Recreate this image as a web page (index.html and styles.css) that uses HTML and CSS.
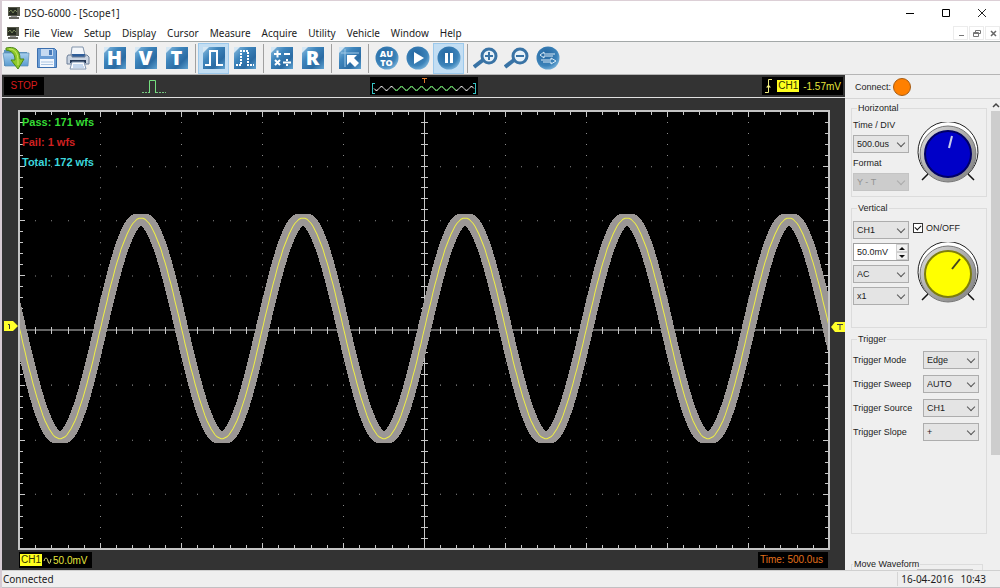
FILE: index.html
```html
<!DOCTYPE html>
<html lang="en">
<head>
    <meta charset="UTF-8">
    <meta name="viewport" content="width=device-width, initial-scale=1.0">
    <title>DSO-6000 - [Scope1]</title>
    <link rel="stylesheet" href="styles.css">
</head>
<body>
    <!-- shared gradients and symbols -->
    <svg class="defs" width="0" height="0" aria-hidden="true">
        <defs>
            <linearGradient id="blue" x1="0" y1="0" x2="1" y2="1">
                <stop offset="0" stop-color="#8fbfe0"/>
                <stop offset="0.35" stop-color="#3f86bd"/>
                <stop offset="0.7" stop-color="#2a6ba3"/>
                <stop offset="1" stop-color="#5fa3d2"/>
            </linearGradient>
            <radialGradient id="ball" cx="0.4" cy="0.35" r="0.7">
                <stop offset="0" stop-color="#24659f"/>
                <stop offset="0.7" stop-color="#3c83b9"/>
                <stop offset="1" stop-color="#7ab4dc"/>
            </radialGradient>
            <linearGradient id="folder" x1="0" y1="0" x2="0" y2="1">
                <stop offset="0" stop-color="#a8d0ee"/>
                <stop offset="1" stop-color="#5b9bd0"/>
            </linearGradient>
            <linearGradient id="metal" x1="0" y1="0" x2="1" y2="1">
                <stop offset="0" stop-color="#e4e4e4"/>
                <stop offset="0.5" stop-color="#a8a8a8"/>
                <stop offset="1" stop-color="#808080"/>
            </linearGradient>
            <symbol id="tile" viewBox="0 0 24 24">
                <path d="M5 1h18v22H1V6z" fill="url(#blue)"/>
                <path d="M1 1h6L1 7z" fill="#d5e7f4"/>
            </symbol>
            <symbol id="scope" viewBox="0 0 12 12">
                <rect width="12" height="9" fill="#57594c"/>
                <rect x="1" y="1" width="8" height="7" fill="#262b20"/>
                <path d="M1 5l2-2 2 3 2-3 2 2" fill="none" stroke="#77855a"/>
                <rect x="3" y="9" width="6" height="1" fill="#999"/>
                <rect x="1" y="10" width="10" height="2" fill="#66665f"/>
            </symbol>
        </defs>
    </svg>

    <header class="titlebar">
        <svg class="app-icon"><use href="#scope"/></svg>
        <h1>DSO-6000 - [Scope1]</h1>
        <div class="window-buttons">
            <button aria-label="Minimize"><svg width="10" height="10"><path d="M1 5.5h8" stroke="#000"/></svg></button>
            <button aria-label="Maximize"><svg width="10" height="10"><path d="M1.5 1.5h7v7h-7z" fill="none" stroke="#000"/></svg></button>
            <button aria-label="Close"><svg width="10" height="10"><path d="M1 1l8 8M9 1l-8 8" stroke="#222"/></svg></button>
        </div>
    </header>

    <nav class="menubar">
        <svg class="app-icon"><use href="#scope"/></svg>
        <button>File</button>
        <button>View</button>
        <button>Setup</button>
        <button>Display</button>
        <button>Cursor</button>
        <button>Measure</button>
        <button>Acquire</button>
        <button>Utility</button>
        <button>Vehicle</button>
        <button>Window</button>
        <button>Help</button>
        <div class="child-buttons">
            <button aria-label="Minimize child"><svg width="8" height="8"><path d="M2 6.5h5" stroke="#777"/></svg></button>
            <button aria-label="Restore child"><svg width="8" height="8"><path d="M2.5 3V1.500h5v3H6M.5 3.500h5v4h-5zM.5 4.500h5" fill="none" stroke="#777"/></svg></button>
            <button aria-label="Close child"><svg width="8" height="8"><path d="M2 2l5 5M7 2l-5 5" stroke="#666" stroke-width="1.500"/></svg></button>
        </div>
    </nav>

    <!-- toolbar -->
    <div class="toolbar">
        <button aria-label="Open">
            <svg width="28" height="24" viewBox="0 0 28 24">
                <path d="M2 4h9l2 2h12v14H2z" fill="#5c94bd"/>
                <path d="M1 7h26l-1 13H3z" fill="url(#folder)" stroke="#5a8db5" stroke-width=".7"/>
                <path d="M4 2c8-2 14 1 14 11h4l-6 10-7-9h4c0-6-3-9-9-10z" fill="#8ec92b" stroke="#4c8818"/>
                <path d="M7 3c6 0 9 4 9 12v4" fill="none" stroke="#cdec6c"/>
            </svg>
        </button>
        <button aria-label="Save">
            <svg width="22" height="24" viewBox="0 0 22 24">
                <path d="M1.500 2.500h17l2 2v17h-19z" fill="#6b9dd5" stroke="#3b6ead"/>
                <path d="M5 3h12v7H5z" fill="#c6daf1"/>
                <path d="M13 4h3v5h-3z" fill="#4779b8"/>
                <path d="M4 13h14v8H4z" fill="#f4f8fd"/>
                <path d="M5 16h12M5 18.500h12" stroke="#abc5e2"/>
            </svg>
        </button>
        <button aria-label="Print">
            <svg width="26" height="24" viewBox="0 0 26 24">
                <path d="M7 1h11l2 8H6z" fill="#f3f6fa" stroke="#8193aa"/>
                <path d="M7 8h13v3H7z" fill="#2e5d99"/>
                <path d="M3 9h4v2h13V9h2l2 2v7H2v-7z" fill="#cad4e1" stroke="#6c7f98"/>
                <path d="M5 14h16v3H5z" fill="#263a58"/>
                <path d="M7 16h12l2 7H5z" fill="#fafcff" stroke="#7f94b0"/>
                <path d="M8 19h10M8 21h11" stroke="#8fb2dc"/>
            </svg>
        </button>
        <span class="sep"></span>
        <button class="letter" aria-label="Horizontal"><svg width="24" height="24"><use href="#tile"/></svg><b>H</b></button>
        <button class="letter" aria-label="Vertical"><svg width="24" height="24"><use href="#tile"/></svg><b>V</b></button>
        <button class="letter" aria-label="Trigger"><svg width="24" height="24"><use href="#tile"/></svg><b>T</b></button>
        <span class="sep"></span>
        <button class="selected" aria-label="Pulse">
            <svg width="24" height="24"><use href="#tile"/><path d="M3 19h5V5h7v14h6" fill="none" stroke="#fff" stroke-width="2"/></svg>
        </button>
        <button aria-label="Dotted pulse">
            <svg width="24" height="24"><use href="#tile"/><path d="M3 19h5V5h7v14h6" fill="none" stroke="#fff" stroke-width="2" stroke-dasharray="2 1"/></svg>
        </button>
        <span class="sep"></span>
        <button aria-label="Math">
            <svg width="24" height="24"><use href="#tile"/><path d="M4 8h7M7.500 4.500v7M14 8h6M5 14l5 5M10 14l-5 5M13 16.500h8" stroke="#fff" stroke-width="2"/><path d="M16 13h2v2h-2zM16 18h2v2h-2z" fill="#fff"/></svg>
        </button>
        <button class="letter" aria-label="Reference"><svg width="24" height="24"><use href="#tile"/></svg><b>R</b></button>
        <span class="sep"></span>
        <button aria-label="Cursor measure">
            <svg width="24" height="24"><use href="#tile"/><path d="M3 7h18M7 3v18" stroke="#9fc8e6"/><path d="M9 9h10l-3 3 5 5-4 4-5-5-3 3z" fill="#fff"/></svg>
        </button>
        <span class="sep"></span>
        <button class="letter auto" aria-label="Auto"><svg width="24" height="24"><circle cx="12" cy="12" r="11.500" fill="url(#ball)"/></svg><b><span>AU</span><span>TO</span></b></button>
        <button aria-label="Run">
            <svg width="24" height="24"><circle cx="12" cy="12" r="11.500" fill="url(#ball)"/><path d="M8 6l10 6-10 6z" fill="#fff"/></svg>
        </button>
        <button class="selected" aria-label="Pause">
            <svg width="24" height="24"><circle cx="12" cy="12" r="11.500" fill="url(#ball)"/><path d="M9.500 7v10M14.500 7v10" stroke="#fff" stroke-width="3"/></svg>
        </button>
        <span class="sep"></span>
        <button aria-label="Zoom in">
            <svg width="26" height="24"><path d="M1 21l9-7" stroke="#3973a5" stroke-width="4"/><circle cx="16" cy="10" r="7" fill="#e8f2f9" stroke="#3973a5" stroke-width="3"/><path d="M12 10h8M16 6v8" stroke="#3973a5" stroke-width="2"/></svg>
        </button>
        <button aria-label="Zoom out">
            <svg width="26" height="24"><path d="M1 21l9-7" stroke="#3973a5" stroke-width="4"/><circle cx="16" cy="10" r="7" fill="#e8f2f9" stroke="#3973a5" stroke-width="3"/><path d="M12 10h8" stroke="#3973a5" stroke-width="2"/></svg>
        </button>
        <button aria-label="Reset zoom">
            <svg width="24" height="24"><circle cx="12" cy="12" r="11.500" fill="url(#ball)"/><path d="M19 8H8V6L4 9l4 3v-2h9M5 14h10v-2l5 3-5 3v-2H7" fill="none" stroke="#d9ebf7"/></svg>
        </button>
    </div>

    <main class="workspace">
        <section class="scope">
            <div class="scope-top">
                <div class="top-left">
                    <span class="lcd stop">STOP</span>
                    <svg class="pulse" width="24" height="16"><path d="M0 14.500h7M14 14.500h10" stroke="#76c680" stroke-dasharray="2 1"/><path d="M7.500 15V2.500h6V15" fill="none" stroke="#76e080"/></svg>
                </div>
                <svg class="preview" width="108" height="18">
                    <rect width="108" height="18" fill="#000"/>
                    <path d="M2.500 6v11M2 6.500h3M2 16.500h3M105.500 6v11M103 6.500h3M103 16.500h3" stroke="#37c5c5"/>
                    <path id="preview-wave" fill="none" stroke="#eee"/>
                    <path id="preview-mid" fill="none" stroke="#38c838"/>
                    <path d="M52 1.500h5M54.500 1v5" stroke="#e07b2c"/>
                </svg>
                <div class="top-right lcd">
                    <svg width="8" height="14"><path d="M0 13.500h3.500v-13H7" fill="none" stroke="#f2ee80"/><path d="M1 8.500l2.500-3 2.500 3z" fill="#f2ee80"/></svg>
                    <mark>CH1</mark>
                    <span>-1.57mV</span>
                </div>
            </div>

            <div class="screen">
                <div class="plot-row">
                    <div class="gutter gutter-left">
                        <svg width="15" height="10"><path d="M1 0h9l5 5-5 5H1z" fill="#ffff2a"/><path d="M5 3.500h1.500V8" fill="none" stroke="#333"/></svg>
                    </div>
                    <div class="plot">
                        <svg viewBox="-1 -1 812 439" preserveAspectRatio="none">
                            <rect x="-1" y="-1" width="812" height="439" fill="#000"/>
                            <path id="dots" class="dots"/>
                            <path id="axes" class="axes"/>
                            <path id="ticks" class="ticks"/>
                            <path id="band" class="band"/>
                            <path id="trace" class="trace"/>
                            <rect width="810" height="437" class="frame"/>
                        </svg>
                        <ul class="counts">
                            <li class="pass">Pass: 171 wfs</li>
                            <li class="fail">Fail: 1 wfs</li>
                            <li class="total">Total: 172 wfs</li>
                        </ul>
                    </div>
                    <div class="gutter gutter-right">
                        <svg width="14" height="10"><path d="M14 0H4L0 5l4 5h10z" fill="#ffff2a"/><path d="M6 2.500h6M9 2v6" stroke="#444"/></svg>
                    </div>
                </div>
                <div class="scope-bottom">
                    <div class="lcd channel">
                        <mark>CH1</mark>
                        <svg width="9" height="8"><path d="M1 5c1-4 3-4 4 0s2 3 3-2" fill="none" stroke="#e4e47a"/></svg>
                        <span>50.0mV</span>
                    </div>
                    <span class="lcd time">Time: 500.0us</span>
                </div>
            </div>
        </section>

        <aside class="sidebar">
            <div class="connect">Connect: <i class="lamp"></i></div>
            <div class="panel">
                <div class="groups">
                    <fieldset class="horizontal">
                        <legend>Horizontal</legend>
                        <div class="column">
                            <label for="timediv">Time / DIV</label>
                            <span class="drop"><select id="timediv"><option>500.0us</option></select></span>
                            <label for="format">Format</label>
                            <span class="drop off"><select id="format" disabled><option>Y - T</option></select></span>
                        </div>
                        <svg class="knob" width="64" height="64" viewBox="0 0 64 64">
                            <path d="M12 52a30 30 0 1 1 40 0" fill="#fff" stroke="#222"/>
                            <circle cx="32" cy="32" r="28" fill="url(#metal)" stroke="#777"/>
                            <circle cx="32" cy="32" r="23" fill="#0000c8" stroke="#000066" stroke-width="2"/>
                            <path d="M33 26l3-12" stroke="#c8cbea" stroke-width="2"/>
                            <path d="M6 58l6-6M58 58l-6-6" stroke="#111" stroke-width="1.500"/>
                        </svg>
                    </fieldset>

                    <fieldset class="vertical">
                        <legend>Vertical</legend>
                        <div class="column">
                            <span class="drop"><select aria-label="Channel"><option>CH1</option></select></span>
                            <span class="spin">
                                <input type="text" value="50.0mV" aria-label="Volts per division">
                                <button aria-label="Up"></button>
                                <button class="down" aria-label="Down"></button>
                            </span>
                            <span class="drop"><select aria-label="Coupling"><option>AC</option></select></span>
                            <span class="drop"><select aria-label="Probe"><option>x1</option></select></span>
                        </div>
                        <div class="knob-column">
                            <label class="check"><input type="checkbox" checked>ON/OFF</label>
                            <svg class="knob" width="64" height="64" viewBox="0 0 64 64">
                                <path d="M12 52a30 30 0 1 1 40 0" fill="#fff" stroke="#222"/>
                                <circle cx="32" cy="32" r="28" fill="url(#metal)" stroke="#777"/>
                                <circle cx="32" cy="32" r="23" fill="#ffff00" stroke="#7d7d0c" stroke-width="2"/>
                                <path d="M36 27l8-10" stroke="#444420" stroke-width="2"/>
                                <path d="M6 58l6-6M58 58l-6-6" stroke="#111" stroke-width="1.500"/>
                            </svg>
                        </div>
                    </fieldset>

                    <fieldset class="trigger">
                        <legend>Trigger</legend>
                        <div class="row"><label for="mode">Trigger Mode</label><span class="drop"><select id="mode"><option>Edge</option></select></span></div>
                        <div class="row"><label for="sweep">Trigger Sweep</label><span class="drop"><select id="sweep"><option>AUTO</option></select></span></div>
                        <div class="row"><label for="source">Trigger Source</label><span class="drop"><select id="source"><option>CH1</option></select></span></div>
                        <div class="row"><label for="slope">Trigger Slope</label><span class="drop"><select id="slope"><option>+</option></select></span></div>
                    </fieldset>

                    <fieldset class="move">
                        <legend>Move Waveform</legend>
                        <div class="move-box"></div>
                    </fieldset>
                </div>
                <div class="scrollbar">
                    <svg width="9" height="12"><path d="M2 8l3-3 3 3" fill="none" stroke="#444" stroke-width="1.500"/></svg>
                    <div class="thumb"></div>
                </div>
            </div>
        </aside>
    </main>

    <footer class="statusbar">
        <span>Connected</span>
        <span class="clock"><span>16-04-2016</span><span>10:43</span></span>
    </footer>

    <script src="script.js"></script>
</body>
</html>
```
FILE: styles.css
```css
* {
    box-sizing: border-box;
}

body {
    margin: 0;
    height: 100vh;
    display: flex;
    flex-direction: column;
    overflow: hidden;
    background: #efefef;
    border-top: 1px solid #dccfd6;
    border-left: 2px solid #d6cbd3;
    font-family: "Noto Sans", sans-serif;
    font-size: 10px;
    color: #1c1c1c;
}

button {
    border: 0;
    padding: 0;
    background: none;
    font: inherit;
    color: inherit;
}

svg {
    display: block;
}

.defs {
    position: absolute;
}

.app-icon {
    width: 12px;
    height: 12px;
    flex: none;
}

/* title and menu */
.titlebar {
    flex: none;
    display: flex;
    align-items: center;
    height: 23px;
    padding-left: 6px;
    gap: 4px;
    background: #fff;
}

.titlebar h1 {
    margin: 0;
    font-size: 10px;
    font-weight: normal;
}

.window-buttons {
    display: flex;
    margin-left: auto;
}

.window-buttons button {
    display: flex;
    justify-content: center;
    width: 36px;
}

.menubar {
    flex: none;
    display: flex;
    align-items: center;
    height: 18px;
    padding-left: 5px;
    gap: 11px;
    background: #fff;
    border-bottom: 1px solid #a3a8a8;
}

.menubar .app-icon {
    margin-right: -6px;
}

.child-buttons {
    display: flex;
    gap: 1px;
    margin-left: auto;
}

.child-buttons button {
    display: flex;
    align-items: center;
    justify-content: center;
    width: 15px;
    height: 14px;
    border: 1px solid #ececec;
}

/* toolbar */
.toolbar {
    flex: none;
    display: flex;
    align-items: center;
    height: 33px;
    margin-left: -2px;
    border-bottom: 1px solid #b5b5b5;
}

.toolbar button {
    display: flex;
    align-items: center;
    justify-content: center;
    width: 31px;
    height: 31px;
}

.toolbar .selected {
    background: #c3def3;
    border: 1px solid #9cc9ec;
}

.toolbar .sep {
    width: 1px;
    height: 29px;
    margin-left: 3px;
    margin-right: 2px;
    background: #a0a0a0;
}

.toolbar .letter {
    display: grid;
    place-content: center;
    place-items: center;
}

.toolbar .letter > * {
    grid-area: 1 / 1;
}

.toolbar .letter b {
    font: bold 20px/20px "Open Sans", sans-serif;
    font-weight: 800;
    color: #fff;
}

.toolbar .auto b {
    display: flex;
    flex-direction: column;
    align-items: center;
    font-size: 9px;
    line-height: 9px;
}

/* scope area */
.workspace {
    flex: 1;
    min-height: 0;
    display: flex;
}

.scope {
    flex: 1;
    min-width: 0;
    display: flex;
    flex-direction: column;
    background: #333;
    font-family: "Liberation Sans", Arial, sans-serif;
    font-size: 10px;
}

.scope-top {
    display: grid;
    grid-template-columns: 1fr auto 1fr;
    align-items: center;
    height: 23px;
    padding: 0 2px;
    border-bottom: 1px solid #e0e0e0;
}

.lcd {
    background: #000;
    color: #e6e63c;
}

.lcd mark {
    padding: 0 1px;
    background: #ffff1e;
    color: #333300;
    line-height: 12px;
}

.top-left {
    display: flex;
    align-items: center;
}

.stop {
    width: 40px;
    line-height: 18px;
    text-align: center;
    color: #d81c1c;
}

.pulse {
    margin-left: 98px;
}

.top-right {
    display: flex;
    align-items: center;
    justify-self: end;
    gap: 4px;
    height: 18px;
    padding: 0 2px 0 3px;
}

.screen {
    flex: 1;
    min-height: 0;
    display: flex;
    flex-direction: column;
    padding-top: 12px;
}

.plot-row {
    flex: 1;
    min-height: 0;
    display: flex;
}

.gutter {
    flex: none;
    display: flex;
    flex-direction: column;
    justify-content: center;
    align-items: flex-end;
}

.gutter-left {
    width: 16px;
    padding-bottom: 9px;
}

.gutter-right {
    width: 15px;
    padding-bottom: 6px;
}

.plot {
    flex: 1;
    min-width: 0;
    position: relative;
}

.plot > svg {
    width: 100%;
    height: 100%;
}

.frame {
    fill: none;
    stroke: #c4c4c4;
    stroke-width: 2;
}

.dots {
    stroke: #8c8c8c;
    fill: none;
}

.ticks,
.axes {
    stroke: #c8c8c8;
    fill: none;
}

.ticks {
    shape-rendering: crispEdges;
}

.band {
    fill: #9b9795;
    shape-rendering: crispEdges;
}

.trace {
    fill: none;
    stroke: #eeee46;
}

/* pass / fail counters lie over the grid */
.counts {
    position: absolute;
    top: 2px;
    left: 4px;
    margin: 0;
    padding: 0;
    list-style: none;
    font-size: 11px;
    font-weight: bold;
    line-height: 20px;
}

.pass {
    color: #35dc35;
}

.fail {
    color: #cf2020;
}

.total {
    color: #3cd7dc;
}

.scope-bottom {
    flex: none;
    display: flex;
    justify-content: space-between;
    align-items: flex-start;
    padding: 2px 17px 2px;
}

.channel {
    display: flex;
    align-items: center;
    gap: 1px;
    height: 16px;
    padding: 0 5px 0 1px;
}

.time {
    padding: 0 5px 0 2px;
    line-height: 16px;
    color: #e0701c;
}

/* side panel */
.sidebar {
    flex: none;
    width: 155px;
    display: flex;
    flex-direction: column;
    font-family: "Liberation Sans", Arial, sans-serif;
    font-size: 9px;
}

.connect {
    flex: none;
    display: flex;
    align-items: center;
    gap: 2px;
    height: 24px;
    padding-left: 10px;
    border-bottom: 1px solid #d5d5d5;
}

.lamp {
    width: 18px;
    height: 18px;
    border: 1px solid #a65c14;
    border-radius: 50%;
    background: #ff8000;
}

.panel {
    flex: 1;
    min-height: 0;
    display: flex;
    overflow: hidden;
}

.groups {
    flex: 1;
    padding: 4px 4px 0 6px;
}

fieldset {
    margin: 0 0 6px;
    padding: 0 1px;
    border: 1px solid #dcdcdc;
    min-width: 0;
}

legend {
    margin-left: 4px;
    padding: 0 1px;
    line-height: 10px;
}

.horizontal,
.vertical {
    display: flex;
    gap: 7px;
}

.column {
    flex: none;
    width: 56px;
    display: flex;
    flex-direction: column;
}

.horizontal .column {
    padding: 7px 0 4px;
}

.horizontal label {
    line-height: 10px;
    margin-bottom: 5px;
    white-space: nowrap;
}

.horizontal .drop {
    margin-bottom: 5px;
}

.horizontal .drop.off {
    margin-bottom: 1px;
}

.horizontal .knob {
    margin-top: 9px;
}

.vertical .column {
    gap: 4px;
    padding: 8px 0 22px;
}

.knob {
    flex: none;
}

.drop {
    position: relative;
    display: block;
    width: 56px;
}

.drop::after {
    content: '';
    position: absolute;
    right: 5px;
    top: 5px;
    width: 5px;
    height: 5px;
    border-right: 1px solid #555;
    border-bottom: 1px solid #555;
    transform: rotate(45deg);
    pointer-events: none;
}

select {
    appearance: none;
    display: block;
    width: 100%;
    height: 18px;
    margin: 0;
    padding: 0 3px;
    border: 1px solid #adadad;
    border-radius: 0;
    background: #e4e4e4;
    font: inherit;
    color: #1c1c1c;
}

.off select {
    background: #ccc;
    border-color: #c4c4c4;
    color: #929292;
    opacity: 1;
}

.off::after {
    border-color: #aaa;
}

.spin {
    display: grid;
    grid-template-columns: 1fr 12px;
    grid-template-rows: 8px 8px;
    height: 18px;
    border: 1px solid #a0a0a0;
    background: #fff;
}

.spin input {
    grid-row: 1 / 3;
    min-width: 0;
    padding: 0 0 0 3px;
    border: 0;
    background: none;
    font: inherit;
    color: inherit;
}

.spin button {
    display: flex;
    align-items: center;
    justify-content: center;
    border: 1px solid #d0d0d0;
    background: #f2f2f2;
}

.spin button::after {
    content: '';
    border: 3px solid transparent;
    border-top: 0;
    border-bottom-color: #111;
}

.spin .down::after {
    border-top: 3px solid #111;
    border-bottom: 0;
}

.knob-column {
    padding-top: 9px;
}

.check {
    display: flex;
    align-items: center;
    gap: 3px;
    height: 12px;
    margin-left: -3px;
    margin-bottom: 8px;
}

.check input {
    appearance: none;
    width: 10px;
    height: 10px;
    margin: 0;
    border: 1px solid #333;
    background: #fff;
}

.check input:checked::after {
    content: '';
    display: block;
    width: 3px;
    height: 5px;
    margin-left: 2px;
    border-right: 1px solid #111;
    border-bottom: 1px solid #111;
    transform: rotate(45deg);
}

.trigger {
    padding-top: 7px;
    padding-bottom: 86px;
    padding-right: 7px;
    margin-bottom: 25px;
}

.row {
    display: flex;
    align-items: center;
    justify-content: space-between;
    height: 18px;
    margin-bottom: 6px;
}

.move {
    margin-right: 4px;
}

.move-box {
    height: 20px;
    margin-left: 64px;
    margin-right: 8px;
    border-top: 2px solid #c4c4c4;
}

.move legend {
    margin-left: 0;
}

.scrollbar {
    flex: none;
    width: 9px;
    display: flex;
    flex-direction: column;
}

.thumb {
    height: 73%;
    background: #cdcdcd;
}

.statusbar {
    flex: none;
    display: flex;
    align-items: center;
    justify-content: space-between;
    height: 18px;
    padding-left: 1px;
    border-top: 1px solid #d0d0d0;
    border-bottom: 1px solid #c2bfc2;
}

.clock {
    display: flex;
    gap: 7px;
    padding: 0 14px 0 3px;
    border-left: 1px solid #d5d5d5;
}
```
FILE: script.js
```js
// plot size in divisions: 10 x 8
const W = 810, H = 437;
const cx = W / 2, cy = H / 2;
const stepX = W / 50, stepY = H / 40;

const wave = x => 217 - 110 * Math.cos((x - 122) * 2 * Math.PI / 162);

function setPath(id, d) {
    document.getElementById(id).setAttribute('d', d);
}

// grid dots
let dots = '';
for (let row = 1; row < 8; row++) {
    for (let i = 1; i < 50; i++) {
        dots += `M${Math.round(i * stepX)} ${Math.round(row * H / 8) + 0.5}h1`;
    }
}
for (let col = 1; col < 10; col++) {
    for (let i = 1; i < 40; i++) {
        dots += `M${Math.round(col * W / 10)} ${Math.round(i * stepY) + 0.5}h1`;
    }
}
setPath('dots', dots);

// ticks on the frame and on both axes
let ticks = '';
for (let i = 1; i < 50; i++) {
    const x = Math.round(i * stepX) + 0.5;
    const len = i % 5 ? 4 : 6;
    ticks += `M${x} 0v${len}M${x} ${H}v${-len}M${x} ${cy - 3}v7`;
}
for (let i = 1; i < 40; i++) {
    const y = Math.round(i * stepY) + 0.5;
    const len = i % 5 ? 4 : 6;
    ticks += `M0 ${y}h${len}M${W} ${y}h${-len}M${cx - 3} ${y}h7`;
}
setPath('ticks', ticks);
setPath('axes', `M0 ${cy}H${W}M${cx + 0.5} 0V${H}`);

// pass/fail mask: the trace widened across and up and down
const upper = [], lower = [];
for (let x = 0; x <= W; x += 2) {
    let lo = Infinity, hi = -Infinity;
    for (let dx = -6; dx <= 6; dx++) {
        const y = wave(x + dx);
        lo = Math.min(lo, y);
        hi = Math.max(hi, y);
    }
    upper.push(`${x} ${lo - 4}`);
    lower.unshift(`${x} ${hi + 4}`);
}
setPath('band', 'M' + upper.concat(lower).join('L') + 'Z');

const trace = [];
for (let x = 0; x <= W; x += 2) {
    trace.push(`${x} ${Math.round(wave(x))}`);
}
setPath('trace', 'M' + trace.join('L'));

// small record preview in the top bar
function zigzag(from, to) {
    const pts = [];
    for (let x = from; x <= to; x++) {
        pts.push(`${x} ${11.5 + 2 * Math.sin((x - 4) * 2 * Math.PI / 10)}`);
    }
    return 'M' + pts.join('L');
}
setPath('preview-wave', zigzag(4, 104));
setPath('preview-mid', zigzag(24, 86));
```
